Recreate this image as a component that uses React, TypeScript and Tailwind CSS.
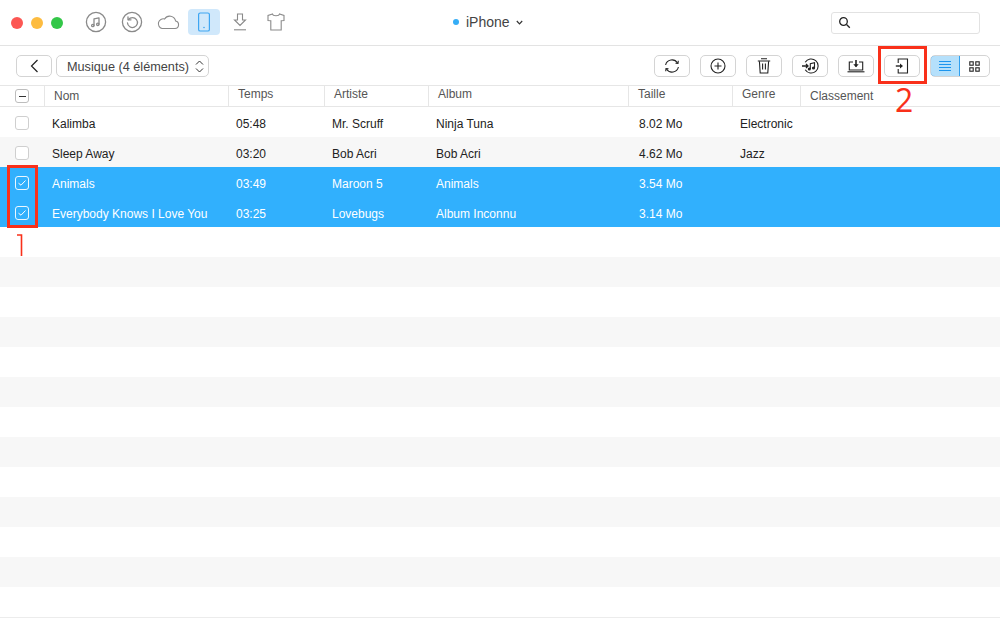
import { ReactNode } from 'react';

const rows = [
  { name: 'Kalimba', time: '05:48', artist: 'Mr. Scruff', album: 'Ninja Tuna', size: '8.02 Mo', genre: 'Electronic', selected: false },
  { name: 'Sleep Away', time: '03:20', artist: 'Bob Acri', album: 'Bob Acri', size: '4.62 Mo', genre: 'Jazz', selected: false },
  { name: 'Animals', time: '03:49', artist: 'Maroon 5', album: 'Animals', size: '3.54 Mo', genre: '', selected: true },
  { name: 'Everybody Knows I Love You', time: '03:25', artist: 'Lovebugs', album: 'Album Inconnu', size: '3.14 Mo', genre: '', selected: true },
];

const emptyRows = Array.from({ length: 13 }, (_, i) => i);

function Icon({ size = 24, children }: { size?: number; children: ReactNode }) {
  return (
    <svg width={size} height={size} viewBox="0 0 24 24" fill="none" stroke="currentColor" strokeWidth="1.3" strokeLinecap="round" strokeLinejoin="round">
      {children}
    </svg>
  );
}

function ToolButton({ children }: { children: ReactNode }) {
  return (
    <button className="flex h-[22px] w-9 items-center justify-center rounded-[5px] border border-[#d4d4d4] bg-white text-[#222]">
      {children}
    </button>
  );
}

function HeaderCell({ label, width, low }: { label: string; width: string; low?: boolean }) {
  return (
    <div className={`${width} flex h-full shrink-0 border-l border-[#e6e6e6] pl-[9px] text-[12px] leading-[15px] text-[#555] ${low ? 'pt-[3px]' : 'pt-px'}`}>
      {label}
    </div>
  );
}

function Checkbox({ checked }: { checked: boolean }) {
  if (checked) {
    return (
      <span className="flex h-[14px] w-[14px] items-center justify-center rounded-[3px] border border-white/90">
        <svg width="10" height="8" viewBox="0 0 10 8" fill="none" stroke="white" strokeWidth="1">
          <path d="M1.5 4.2 L4 6.2 L8.5 1.5" />
        </svg>
      </span>
    );
  }
  return <span className="h-[14px] w-[14px] rounded-[3px] border border-[#cfcfcf] bg-white" />;
}

export default function App() {
  return (
    <div className="relative h-[620px] w-[1000px] overflow-hidden bg-white font-['Liberation_Sans',Arial,sans-serif]">
      {/* Title bar */}
      <div className="flex h-[46px] items-center border-b border-[#e3e3e3] pb-px">
        <div className="ml-[11px] mt-px flex gap-[8px]">
          <span className="h-3 w-3 rounded-full bg-[#fc5753]" />
          <span className="h-3 w-3 rounded-full bg-[#fdbc40]" />
          <span className="h-3 w-3 rounded-full bg-[#33c748]" />
        </div>
        <div className="ml-[15px] flex items-center text-[#8a8a8a]">
          <span className="flex h-[26px] w-9 items-center justify-center">
            <Icon size={24}>
              <circle cx="12" cy="12" r="9.6" />
              <path d="M10 15.5V8.8l5-1v6.4" />
              <circle cx="8.8" cy="15.5" r="1.2" />
              <circle cx="13.8" cy="14.3" r="1.2" />
            </Icon>
          </span>
          <span className="flex h-[26px] w-9 items-center justify-center">
            <Icon size={24}>
              <circle cx="12" cy="12" r="9.6" />
              <path d="M8.5 9.5A5 5 0 1 1 7.5 13" />
              <path d="M8 6.8v3h3" />
            </Icon>
          </span>
          <span className="flex h-[26px] w-9 items-center justify-center">
            <svg width="24" height="16" viewBox="0 0 24 16" fill="none" stroke="currentColor" strokeWidth="1.1">
              <path d="M6 14.5h13a3.8 3.8 0 0 0 .6-7.5A6 6 0 0 0 8.6 5 4.8 4.8 0 0 0 6 14.5z" />
            </svg>
          </span>
          <span className="ml-[2px] flex h-[26px] w-8 items-center justify-center rounded-[4px] bg-[#d0e8fb] text-[#3ea6f2]">
            <svg width="14" height="20" viewBox="0 0 14 20" fill="none" stroke="currentColor" strokeWidth="1.2">
              <rect x="1.6" y="1" width="10.8" height="18" rx="1.6" />
              <circle cx="7" cy="15.5" r="0.8" fill="currentColor" stroke="none" />
            </svg>
          </span>
          <span className="ml-[2px] flex h-[26px] w-9 items-center justify-center">
            <svg width="14" height="18" viewBox="0 0 14 18" fill="none" stroke="currentColor" strokeWidth="1.1">
              <path d="M4.5 1h5v6h3L7 12.5 1.5 7h3z" />
              <path d="M1 16.8h12" />
            </svg>
          </span>
          <span className="flex h-[26px] w-9 items-center justify-center">
            <svg width="18" height="18" viewBox="0 0 18 18" fill="none" stroke="currentColor" strokeWidth="1.1">
              <path d="M5.5 1 1 2.5v5l2.8.2V17h10.4V7.7L17 7.5v-5L12.5 1c-.5 2.4-6.5 2.4-7 0z" />
            </svg>
          </span>
        </div>
        <div className="ml-[159px] flex items-center text-[14px] text-[#444]">
          <span className="mr-[7px] h-[6px] w-[6px] rounded-full bg-[#35adf6]" />
          <span>iPhone</span>
          <svg className="ml-[6px] mt-px" width="7" height="5" viewBox="0 0 7 5" fill="none" stroke="#333" strokeWidth="1.2">
            <path d="M.8 1 3.5 3.8 6.2 1" />
          </svg>
        </div>
        <div className="ml-auto mr-[20px] mt-px flex h-[22px] w-[149px] items-center rounded-[3px] border border-[#e2e2e2] pl-[6px] text-[#222]">
          <svg width="13" height="13" viewBox="0 0 13 13" fill="none" stroke="currentColor" strokeWidth="1.3">
            <circle cx="5.5" cy="5.5" r="3.8" />
            <path d="m8.5 8.5 3.3 3.3" />
          </svg>
        </div>
      </div>

      {/* Toolbar */}
      <div className="flex h-[40px] items-center border-b border-[#e6e6e6] pl-4 pr-[10px] pt-px">
        <button className="flex h-[22px] w-9 items-center justify-center rounded-[5px] border border-[#d4d4d4] text-[#222]">
          <svg width="9" height="14" viewBox="0 0 9 14" fill="none" stroke="currentColor" strokeWidth="1.2">
            <path d="M7.5 1 1.5 7l6 6" />
          </svg>
        </button>
        <button className="ml-1 flex h-[22px] w-[153px] items-center justify-between rounded-[5px] border border-[#d4d4d4] pl-[10px] pr-[4px] text-[12.7px] leading-[16px] text-[#444]">
          <span className="pt-[2px]">Musique (4 éléments)</span>
          <svg width="9" height="13" viewBox="0 0 9 13" fill="none" stroke="#333" strokeWidth="1">
            <path d="M1 4.5 4.5 1 8 4.5M1 8.5 4.5 12 8 8.5" />
          </svg>
        </button>
        <div className="ml-auto flex items-center gap-[10px]">
          <ToolButton>
            <svg width="16" height="16" viewBox="0 0 16 16" fill="none" stroke="currentColor" strokeWidth="1.1">
              <path d="M1.6 7A6.5 6.5 0 0 1 13.5 5M14.4 9A6.5 6.5 0 0 1 2.5 11" />
              <path d="m11.5 5.2 2.5.2.3-2.6M4.5 10.8 2 10.6l-.3 2.6" />
            </svg>
          </ToolButton>
          <ToolButton>
            <svg width="16" height="16" viewBox="0 0 16 16" fill="none" stroke="currentColor" strokeWidth="1.1">
              <circle cx="8" cy="8" r="7" />
              <path d="M8 4.5v7M4.5 8h7" />
            </svg>
          </ToolButton>
          <ToolButton>
            <svg width="14" height="16" viewBox="0 0 14 16" fill="none" stroke="currentColor" strokeWidth="1.1">
              <path d="M4 .8h6M.8 3h12.4" />
              <path d="M2.4 3.2 3.2 15h7.6l.8-11.8" />
              <path d="M5.6 5.5v6M8.4 5.5v6" />
            </svg>
          </ToolButton>
          <ToolButton>
            <svg width="18" height="16" viewBox="0 0 18 16" fill="none" stroke="currentColor" strokeWidth="1.1">
              <path d="M4.2 4.3A7 7 0 1 1 4.2 11.7" />
              <path d="M1 8h6M5 6l2 2-2 2" strokeWidth="1.3" />
              <path d="M9.3 11V5.6l4.2-.9V10" />
              <circle cx="8.3" cy="11" r="1" fill="currentColor" />
              <circle cx="12.5" cy="10" r="1" fill="currentColor" />
            </svg>
          </ToolButton>
          <ToolButton>
            <svg width="18" height="14" viewBox="0 0 18 14" fill="none" stroke="currentColor" strokeWidth="1.1">
              <path d="M6 3H2.3v8h13.4V3H12" />
              <path d="M.5 12.8h17" />
              <path d="M9 1v6.5" strokeWidth="1.6" />
              <path d="M6.3 5.2 9 8.2l2.7-3z" fill="currentColor" stroke="none" />
            </svg>
          </ToolButton>
          <ToolButton>
            <svg width="14" height="16" viewBox="0 0 14 16" fill="none" stroke="currentColor" strokeWidth="1.1">
              <path d="M3.2 5V1h9.3v14H3.2v-4" />
              <path d="M.8 8h5" strokeWidth="1.4" />
              <path d="M5 5.4 8 8l-3 2.6z" fill="currentColor" stroke="none" />
            </svg>
          </ToolButton>
          <div className="flex h-[22px] w-[60px] overflow-hidden rounded-[5px] border border-[#d4d4d4]">
            <span className="-my-px -ml-px flex w-[30px] items-center justify-center rounded-l-[5px] border border-[#2f9fef] bg-[#b5e0fb] text-[#1b95ee]">
              <svg width="14" height="10" viewBox="0 0 14 10" stroke="currentColor" strokeWidth="1">
                <path d="M1 .5h12M1 3.5h12M1 6.5h12M1 9.5h12" />
              </svg>
            </span>
            <span className="flex flex-1 items-center justify-center text-[#222]">
              <svg width="11" height="11" viewBox="0 0 11 11" fill="none" stroke="currentColor" strokeWidth="1.1">
                <rect x=".8" y=".8" width="3.4" height="3.4" />
                <rect x="6.8" y=".8" width="3.4" height="3.4" />
                <rect x=".8" y="6.8" width="3.4" height="3.4" />
                <rect x="6.8" y="6.8" width="3.4" height="3.4" />
              </svg>
            </span>
          </div>
        </div>
      </div>

      {/* Column headers */}
      <div className="flex h-[21px] items-start border-b border-[#e6e6e6]">
        <div className="flex h-full w-[44px] shrink-0 items-center pl-[15px]">
          <span className="flex h-[14px] w-[14px] items-center justify-center rounded-[3px] border border-[#bdbdbd]">
            <span className="h-px w-[7px] bg-[#333]" />
          </span>
        </div>
        <HeaderCell label="Nom" width="w-[184px]" low />
        <HeaderCell label="Temps" width="w-[96px]" />
        <HeaderCell label="Artiste" width="w-[104px]" />
        <HeaderCell label="Album" width="w-[200px]" />
        <HeaderCell label="Taille" width="w-[104px]" />
        <HeaderCell label="Genre" width="w-[68px]" />
        <HeaderCell label="Classement" width="flex-1" low />
      </div>

      {/* Rows */}
      <div className="border-b border-[#ececec]">
        {rows.map((row, i) => (
          <div
            key={row.name}
            className={`flex h-[30px] items-center pt-[3px] text-[12px] ${row.selected ? 'bg-[#31b0fd] text-white' : i % 2 ? 'bg-[#f7f7f7] text-[#222]' : 'bg-white text-[#222]'}`}
          >
            <div className="-mt-[2px] flex w-[52px] shrink-0 pl-[15px]">
              <Checkbox checked={row.selected} />
            </div>
            <div className="w-[184px] shrink-0">{row.name}</div>
            <div className="w-[96px] shrink-0">{row.time}</div>
            <div className="w-[104px] shrink-0">{row.artist}</div>
            <div className="w-[203px] shrink-0">{row.album}</div>
            <div className="w-[101px] shrink-0">{row.size}</div>
            <div>{row.genre}</div>
          </div>
        ))}
        {emptyRows.map((i) => (
          <div key={i} className={`h-[30px] ${i % 2 ? 'bg-[#f7f7f7]' : 'bg-white'}`} />
        ))}
      </div>

      {/* Red annotations */}
      <div className="absolute left-[7px] top-[165px] h-[63px] w-[31px] border-[3px] border-[#f9301a]" />
      <div className="absolute left-[15px] top-[234px] leading-none">
        <svg width="9" height="22" viewBox="0 0 9 22" fill="none" stroke="#f9301a" strokeWidth="1.6">
          <path d="M2 1h4.5v21" />
        </svg>
      </div>
      <div className="absolute left-[878px] top-[46px] h-[38px] w-[49px] border-[3px] border-[#f9301a]" />
      <div className="absolute left-[895px] top-[81px] font-['Open_Sans',sans-serif] text-[32px] leading-[38px] text-[#f9301a]">2</div>
    </div>
  );
}
